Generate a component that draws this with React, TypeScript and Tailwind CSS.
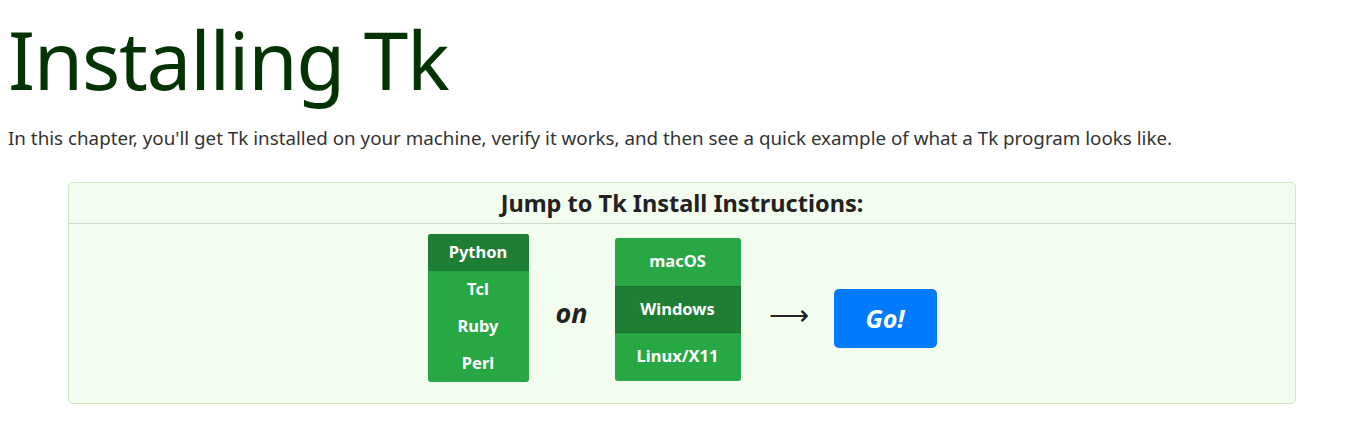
import React from 'react';

const langs = ['Python', 'Tcl', 'Ruby', 'Perl'];
const platforms = ['macOS', 'Windows', 'Linux/X11'];

export default function App() {
    const lang = 'Python';
    const platform = 'Windows';

    return (
        <div className="bg-white h-[432px] overflow-hidden px-2 text-[#333]" style={{ fontFamily: '"Noto Sans", "Open Sans", sans-serif' }}>
            <h1 className="text-[80px] leading-none font-normal text-[#033303] pt-[19px] tracking-[-1.3px]">Installing Tk</h1>
            <p className="text-[18.8px] leading-[26px] mt-[26px] text-[#333]">
                In this chapter, you'll get Tk installed on your machine, verify it works, and then see a quick example of what a Tk program looks like.
            </p>

            <div className="mt-[31px] ml-[60px] w-[1228px] h-[222px] border border-[#cdeac3] rounded-[5px] bg-[#f2fdf0] flex flex-col">
                <div className="h-[41px] border-b border-[#cfd8cc] flex items-center justify-center">
                    <h2 className="text-[23.5px] font-bold text-[#222] leading-none mt-[2px]">Jump to Tk Install Instructions:</h2>
                </div>
                <div className="flex-1 flex items-start justify-center">
                    <ul className="mt-[10px] w-[101px] rounded-[3px] overflow-hidden bg-[#28a745]">
                        {langs.map((l) => (
                            <li
                                key={l}
                                className={`h-[37px] flex items-center justify-center text-white font-bold text-[16.5px] ${l === lang ? 'bg-[#1e7e34]' : ''}`}
                            >
                                {l}
                            </li>
                        ))}
                    </ul>
                    <div className="w-[86px] mt-[69px] text-center italic font-bold text-[27px] text-[#222]">on</div>
                    <ul className="mt-[14px] w-[126px] rounded-[3px] overflow-hidden bg-[#28a745]">
                        {platforms.map((p) => (
                            <li
                                key={p}
                                className={`h-[47.5px] flex items-center justify-center text-white font-bold text-[16.5px] ${p === platform ? 'bg-[#1e7e34] border-y border-[#1a6f2e]' : ''}`}
                            >
                                {p}
                            </li>
                        ))}
                    </ul>
                    <div className="w-[93px] mt-[76px] text-center text-[28px] leading-none text-[#222] pl-[3px]">⟶</div>
                    <button
                        type="button"
                        className="mt-[65px] w-[103px] h-[59px] rounded-[5px] bg-[#007bff] text-white italic font-bold text-[25px]"
                    >
                        Go!
                    </button>
                </div>
            </div>
        </div>
    );
}
